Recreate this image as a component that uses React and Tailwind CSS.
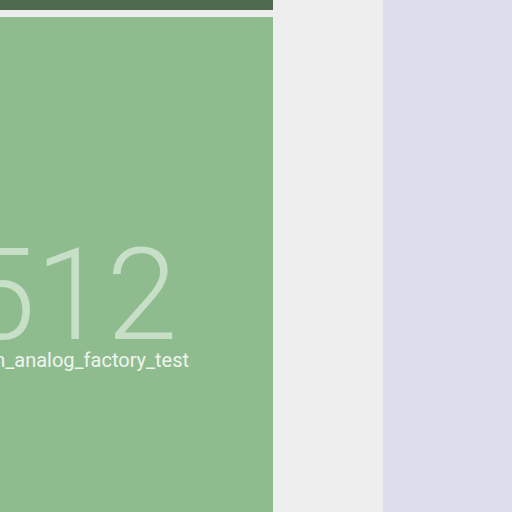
import React from 'react';

const App = () => {
  return (
    <div className="flex h-[512px] w-[512px] overflow-hidden bg-[#eeeeee]" style={{ fontFamily: 'Roboto, "Liberation Sans", sans-serif' }}>
      {/* Left column */}
      <div className="flex w-[273px] shrink-0 flex-col gap-[7px]">
        <div className="h-[10px] bg-[#4e6a4f]" />
        <div className="flex-1 overflow-hidden bg-[#8fbc8f] pt-[214px]">
          <div className="-ml-[79px] flex w-[300px] flex-col items-center text-center">
            <div className="text-[128px] font-light leading-none text-[#c7dfc7]">512</div>
            <div className="-mt-[9px] ml-[8px] whitespace-nowrap text-[20px] leading-none text-[#eef5ee]">main_analog_factory_test</div>
          </div>
        </div>
      </div>
      {/* Middle */}
      <div className="w-[110px] shrink-0 bg-[#eeeeee]" />
      {/* Right */}
      <div className="flex-1 bg-[#dedded]" />
    </div>
  );
};

export default App;
